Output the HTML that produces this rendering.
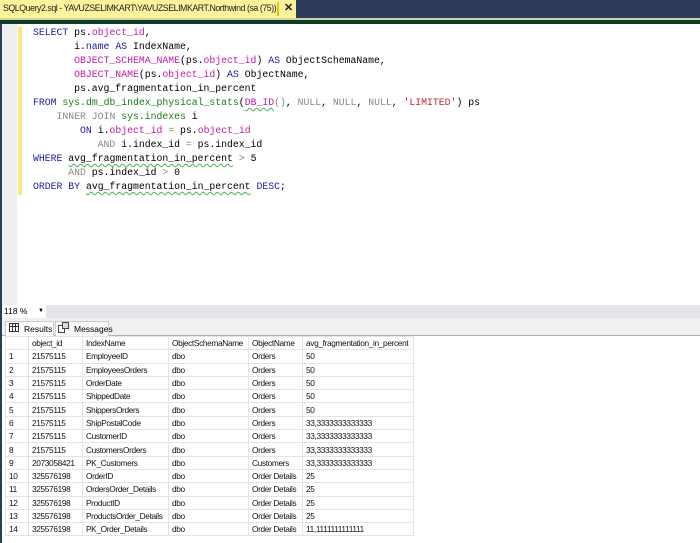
<!DOCTYPE html>
<html><head><style>
*{margin:0;padding:0;box-sizing:border-box}
body{width:700px;height:543px;overflow:hidden;background:#fff;position:relative;font-family:"Liberation Sans",sans-serif}
.abs{position:absolute}
#title{left:0;top:0;width:700px;height:18px;background:#2c3a5c}
#tab{left:0;top:0;width:296px;height:18px;background:#fff29d;font-size:8.8px;line-height:17px;padding-left:3px;color:#1e1e1e;white-space:nowrap;letter-spacing:-0.45px;overflow:hidden}
#tab .x{position:absolute;left:284px;top:0;font-size:11px;font-weight:bold;letter-spacing:0}
#tab .sep{position:absolute;left:277px;top:2px;width:2px;height:14px;background:#e0c800}
#line1{left:0;top:18px;width:700px;height:2px;background:#c8d8a0}
#line2{left:0;top:20px;width:700px;height:4px;background:#0f3d24}
#leftedge{left:0;top:24px;width:2px;height:519px;background:#2c3a5c}
#gutter{left:2px;top:24px;width:15px;height:281px;background:#eeeeee}
#ybar{left:18px;top:27px;width:4px;height:168px;background:#f7e97a}
#code{left:33px;top:26px;font-family:"Liberation Mono",monospace;font-size:9.8px;line-height:14px;white-space:pre;color:#000}
.k{color:#1a1aa6}.m{color:#c01aa6}.g{color:#1a7a1a}.gr{color:#888}.s{color:#c0272d}
.w{text-decoration:underline wavy #4caf50;text-decoration-thickness:1px;text-underline-offset:2px}
#zoom{left:2px;top:305px;width:698px;height:13px;background:#e5e5ea}
#zb{left:2px;top:305px;width:44px;height:13px;background:#fff;font-size:8.5px;line-height:13px;padding-left:2px;white-space:nowrap}
#tabs{left:2px;top:318px;width:698px;height:18px;background:#f0f0f0;border-bottom:1px solid #b0b0b0}
.t{position:absolute;top:3px;height:15px;font-size:8.5px;line-height:15px;background:#f8f8f8;border:1px solid #ccc;border-bottom:none;padding-left:18px;white-space:nowrap}
table{position:absolute;left:5px;top:336px;border-collapse:collapse;table-layout:fixed;width:408px;font-size:8.3px;color:#111;letter-spacing:-0.35px}
td{height:13.3px;border:1px solid #e4e4e4;padding:0 0 0 3px;white-space:nowrap;overflow:hidden;line-height:12px}
</style></head><body>
<div id="title" class="abs"></div>
<div id="tab" class="abs">SQLQuery2.sql - YAVUZSELIMKART\YAVUZSELIMKART.Northwind (sa (75))<span class="sep"></span><span class="x">✕</span></div>
<div id="line1" class="abs"></div><div id="line2" class="abs"></div>
<div id="gutter" class="abs"></div>
<div id="leftedge" class="abs"></div>
<div id="ybar" class="abs"></div>
<div id="code" class="abs"><span class="k">SELECT</span> ps.<span class="m">object_id</span>,
       i.<span class="k">name</span> <span class="k">AS</span> IndexName,
       <span class="m">OBJECT_SCHEMA_NAME</span>(ps.<span class="m">object_id</span>) <span class="k">AS</span> ObjectSchemaName,
       <span class="m">OBJECT_NAME</span>(ps.<span class="m">object_id</span>) <span class="k">AS</span> ObjectName,
       ps.avg_fragmentation_in_percent
<span class="k">FROM</span> <span class="g">sys.dm_db_index_physical_stats</span>(<span class="m w">DB_ID</span><span class="gr">()</span>, <span class="gr">NULL</span>, <span class="gr">NULL</span>, <span class="gr">NULL</span>, <span class="s">'LIMITED'</span>) ps
    <span class="gr">INNER JOIN</span> <span class="g">sys.indexes</span> i
        <span class="k">ON</span> i.<span class="m">object_id</span> <span class="gr">=</span> ps.<span class="m">object_id</span>
           <span class="gr">AND</span> i.index_id <span class="gr">=</span> ps.index_id
<span class="k">WHERE</span> <span class="w">avg_fragmentation_in_percent</span> <span class="gr">&gt;</span> 5
      <span class="gr">AND</span> ps.index_id <span class="gr">&gt;</span> 0
<span class="k">ORDER BY</span> <span class="w">avg_fragmentation_in_percent</span> <span class="k">DESC</span>;</div>
<div id="zoom" class="abs"></div>
<div id="zb" class="abs">118 %<span style="position:absolute;left:36px;font-size:6px">▼</span></div>
<div id="tabs" class="abs">
<div class="t" style="left:3px;width:49px;background:#fff">Results</div>
<div class="t" style="left:53px;width:54px">Messages</div>
</div>
<svg class="abs" style="left:9px;top:323px" width="10" height="9"><rect x=".5" y=".5" width="9" height="8" fill="#fff" stroke="#333"/><path d="M0 3.5h10M3.5 0v9M6.5 0v9" stroke="#333"/></svg>
<svg class="abs" style="left:58px;top:322px" width="11" height="11"><rect x=".5" y="3.5" width="6" height="7" fill="#fff" stroke="#444"/><rect x="4.5" y=".5" width="6" height="6" fill="#ddd" stroke="#444"/></svg>
<table>
<colgroup><col style="width:23px"><col style="width:54px"><col style="width:86px"><col style="width:80px"><col style="width:54px"><col style="width:111px"></colgroup>
<tr><td></td><td>object_id</td><td>IndexName</td><td>ObjectSchemaName</td><td>ObjectName</td><td>avg_fragmentation_in_percent</td></tr>
<tr><td>1</td><td style="border:1px dashed #777">21575115</td><td>EmployeeID</td><td>dbo</td><td>Orders</td><td>50</td></tr>
<tr><td>2</td><td>21575115</td><td>EmployeesOrders</td><td>dbo</td><td>Orders</td><td>50</td></tr>
<tr><td>3</td><td>21575115</td><td>OrderDate</td><td>dbo</td><td>Orders</td><td>50</td></tr>
<tr><td>4</td><td>21575115</td><td>ShippedDate</td><td>dbo</td><td>Orders</td><td>50</td></tr>
<tr><td>5</td><td>21575115</td><td>ShippersOrders</td><td>dbo</td><td>Orders</td><td>50</td></tr>
<tr><td>6</td><td>21575115</td><td>ShipPostalCode</td><td>dbo</td><td>Orders</td><td>33,3333333333333</td></tr>
<tr><td>7</td><td>21575115</td><td>CustomerID</td><td>dbo</td><td>Orders</td><td>33,3333333333333</td></tr>
<tr><td>8</td><td>21575115</td><td>CustomersOrders</td><td>dbo</td><td>Orders</td><td>33,3333333333333</td></tr>
<tr><td>9</td><td>2073058421</td><td>PK_Customers</td><td>dbo</td><td>Customers</td><td>33,3333333333333</td></tr>
<tr><td>10</td><td>325576198</td><td>OrderID</td><td>dbo</td><td>Order Details</td><td>25</td></tr>
<tr><td>11</td><td>325576198</td><td>OrdersOrder_Details</td><td>dbo</td><td>Order Details</td><td>25</td></tr>
<tr><td>12</td><td>325576198</td><td>ProductID</td><td>dbo</td><td>Order Details</td><td>25</td></tr>
<tr><td>13</td><td>325576198</td><td>ProductsOrder_Details</td><td>dbo</td><td>Order Details</td><td>25</td></tr>
<tr><td>14</td><td>325576198</td><td>PK_Order_Details</td><td>dbo</td><td>Order Details</td><td>11,1111111111111</td></tr>
</table>
</body></html>
